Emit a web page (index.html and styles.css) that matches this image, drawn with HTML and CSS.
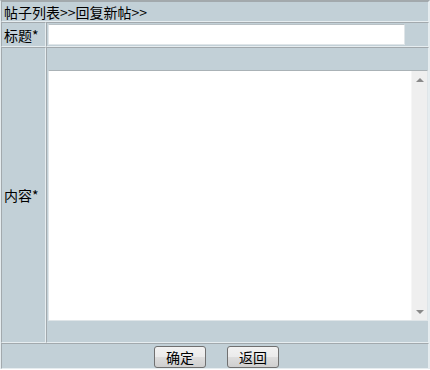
FILE: index.html
```html
<!doctype html>
<html lang="zh-CN">
<head>
  <meta charset="utf-8">
  <title>回复新帖</title>
  <link rel="stylesheet" href="styles.css">
</head>
<body>
  <form class="replyForm">
    <table class="formTable">
      <tr>
        <td colspan="2" class="navCell">帖子列表&gt;&gt;回复新帖&gt;&gt;</td>
      </tr>
      <tr>
        <td class="labelCell">标题*</td>
        <td class="fieldCell titleCell"><input type="text" class="titleInput" name="title"></td>
      </tr>
      <tr>
        <td class="labelCell">内容*</td>
        <td class="fieldCell contentCell">
          <div class="contentBox">
            <textarea class="contentInput" name="content"></textarea>
            <div class="scrollTrack">
              <span class="arrowUp"></span>
              <span class="arrowDown"></span>
            </div>
          </div>
        </td>
      </tr>
      <tr>
        <td colspan="2" class="actionCell">
          <div class="actions">
            <button type="submit" class="btn">确定</button>
            <button type="button" class="btn">返回</button>
          </div>
        </td>
      </tr>
    </table>
  </form>
</body>
</html>
```

FILE: styles.css
```css
body {
  margin: 0;
  background: #ffffff;
  font-family: "Noto Sans CJK SC", "Liberation Sans", sans-serif;
  font-size: 14px;
  color: #000000;
}
.replyForm {
  margin: 0;
}
table.formTable {
  width: 430px;
  border-collapse: separate;
  border-spacing: 0;
  background-color: #c2d0d7;
  border-top: 1px solid #a3a9ac;
  border-left: 1px solid #e5ecef;
  border-right: 1px solid #e5ecef;
  border-bottom: none;
}
.formTable td {
  border: 1px solid;
  border-color: #a2a9ad #e6edf0 #e6edf0 #a2a9ad;
  padding: 0 2px;
  line-height: 18px;
  vertical-align: middle;
}
.formTable .navCell {
  padding: 1px 2px 0;
}
.formTable .labelCell {
  width: 39px;
  white-space: nowrap;
}
.formTable .fieldCell {
  padding: 1px;
}
.formTable .contentCell {
  padding: 22px 0 21px 1px;
}
.titleInput {
  display: block;
  box-sizing: border-box;
  width: 357px;
  height: 21px;
  margin: 0;
  border: 1px solid #dfe5e8;
  border-top-color: #b9c1c5;
  background: #ffffff;
  font: inherit;
  padding: 0 2px;
}

/* textarea with a drawn classic scrollbar */
.contentBox {
  display: flex;
  box-sizing: border-box;
  width: 380px;
  height: 251px;
  border: 1px solid #dfe5e8;
  border-top-color: #aab2b6;
  background: #ffffff;
}
.contentInput {
  flex: 1;
  margin: 0;
  padding: 2px;
  border: none;
  background: transparent;
  font: inherit;
  resize: none;
  overflow: hidden;
  outline: none;
}
.scrollTrack {
  display: flex;
  flex-direction: column;
  justify-content: space-between;
  align-items: center;
  box-sizing: border-box;
  width: 16px;
  padding: 7px 0 6px;
  background: #efefef;
  border-left: 1px solid #f6f6f6;
}
.arrowUp, .arrowDown {
  width: 0;
  height: 0;
  border-left: 4px solid transparent;
  border-right: 4px solid transparent;
}
.arrowUp {
  border-bottom: 4px solid #8a8a8a;
}
.arrowDown {
  border-top: 4px solid #8a8a8a;
}

.formTable .actionCell {
  padding: 2px 0 0 3px;
}
.actions {
  display: flex;
  justify-content: center;
  gap: 21px;
}
.btn {
  box-sizing: border-box;
  width: 52px;
  height: 22px;
  padding: 0;
  border: 1px solid #707070;
  border-radius: 3px;
  background: linear-gradient(to bottom, #f2f2f2 0%, #ebebeb 50%, #dddddd 51%, #cfcfcf 100%);
  font: inherit;
  line-height: 18px;
  color: #000000;
}
```
